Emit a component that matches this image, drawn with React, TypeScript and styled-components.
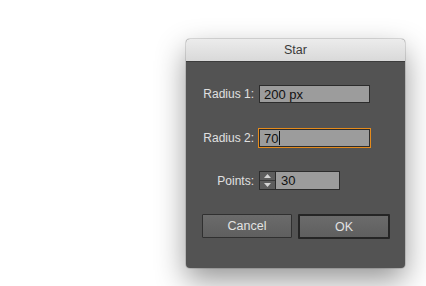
import styled, { createGlobalStyle } from "styled-components";

const GlobalStyle = createGlobalStyle`
  html, body {
    margin: 0;
    padding: 0;
    background: #ffffff;
  }
  body {
    font-family: "Liberation Sans", Arial, sans-serif;
  }
`;

const Page = styled.div`
  width: 426px;
  height: 286px;
  padding: 39px 0 0 186px;
  box-sizing: border-box;
  overflow: hidden;
`;

const Dialog = styled.div`
  width: 219px;
  height: 229px;
  display: flex;
  flex-direction: column;
  background: #535353;
  border-radius: 4px;
  box-shadow: 0 0 0 1px rgba(0, 0, 0, 0.12), 0 12px 30px rgba(0, 0, 0, 0.42);
  overflow: hidden;
`;

const TitleBar = styled.div`
  height: 22px;
  flex: none;
  display: flex;
  align-items: center;
  justify-content: center;
  background: linear-gradient(#ececec, #d9d9d9);
  border-bottom: 1px solid #3c3c3c;
  font-size: 12.5px;
  color: #3a3a3a;
`;

const Body = styled.div`
  display: flex;
  flex-direction: column;
  padding: 23px 0 0 16px;
`;

const Row = styled.div<{ $gap: number }>`
  display: grid;
  grid-template-columns: 52px auto;
  column-gap: 5px;
  align-items: center;
  margin-bottom: ${(p) => p.$gap}px;
`;

const Label = styled.label`
  justify-self: end;
  font-size: 12px;
  color: #e0e0e0;
  white-space: nowrap;
`;

const Field = styled.div<{ $width: number; $focused?: boolean }>`
  width: ${(p) => p.$width}px;
  height: 18px;
  box-sizing: border-box;
  display: flex;
  align-items: center;
  padding-left: 4px;
  background: #9c9c9c;
  border: 1px solid #2c2c2c;
  outline: ${(p) => (p.$focused ? "1px solid #e58b1c" : "none")};
  font-size: 13px;
  color: #111111;
`;

const Caret = styled.span`
  display: inline-block;
  width: 1px;
  height: 14px;
  margin-left: 1px;
  background: #111111;
`;

const NumberBox = styled.div`
  display: flex;
  height: 19px;
`;

const Stepper = styled.div`
  width: 16px;
  height: 19px;
  box-sizing: border-box;
  display: flex;
  flex-direction: column;
  background: #5d5d5d;
  border: 1px solid #2c2c2c;
  border-right: none;
`;

const StepHalf = styled.div<{ $down?: boolean }>`
  flex: 1;
  display: flex;
  align-items: center;
  justify-content: center;
  border-top: ${(p) => (p.$down ? "1px solid #3a3a3a" : "none")};
`;

const NumberField = styled(Field)`
  height: 19px;
  padding-left: 5px;
`;

const Buttons = styled.div`
  display: flex;
  align-items: flex-start;
  gap: 6px;
  margin-top: 24px;
`;

const Button = styled.button<{ $primary?: boolean }>`
  width: ${(p) => (p.$primary ? 92 : 90)}px;
  height: ${(p) => (p.$primary ? 25 : 24)}px;
  box-sizing: border-box;
  padding: 0;
  background: linear-gradient(#6b6b6b, #5f5f5f);
  border: ${(p) => (p.$primary ? "2px solid #252525" : "1px solid #303030")};
  border-radius: 1px;
  font-family: "Liberation Sans", Arial, sans-serif;
  font-size: 12.5px;
  color: #e2e2e2;
`;

const Arrow = ({ down }: { down?: boolean }) => (
  <svg width="7" height="4" viewBox="0 0 7 4">
    <polygon
      points={down ? "0,0 7,0 3.5,4" : "0,4 7,4 3.5,0"}
      fill="#d4d4d4"
    />
  </svg>
);

export default function App() {
  return (
    <>
      <GlobalStyle />
      <Page>
        <Dialog>
          <TitleBar>Star</TitleBar>
          <Body>
            <Row $gap={26}>
              <Label>Radius 1:</Label>
              <Field $width={111}>200 px</Field>
            </Row>
            <Row $gap={24}>
              <Label>Radius 2:</Label>
              <Field $width={111} $focused>
                70
                <Caret />
              </Field>
            </Row>
            <Row $gap={0}>
              <Label>Points:</Label>
              <NumberBox>
                <Stepper>
                  <StepHalf>
                    <Arrow />
                  </StepHalf>
                  <StepHalf $down>
                    <Arrow down />
                  </StepHalf>
                </Stepper>
                <NumberField $width={65}>30</NumberField>
              </NumberBox>
            </Row>
            <Buttons>
              <Button>Cancel</Button>
              <Button $primary>OK</Button>
            </Buttons>
          </Body>
        </Dialog>
      </Page>
    </>
  );
}
